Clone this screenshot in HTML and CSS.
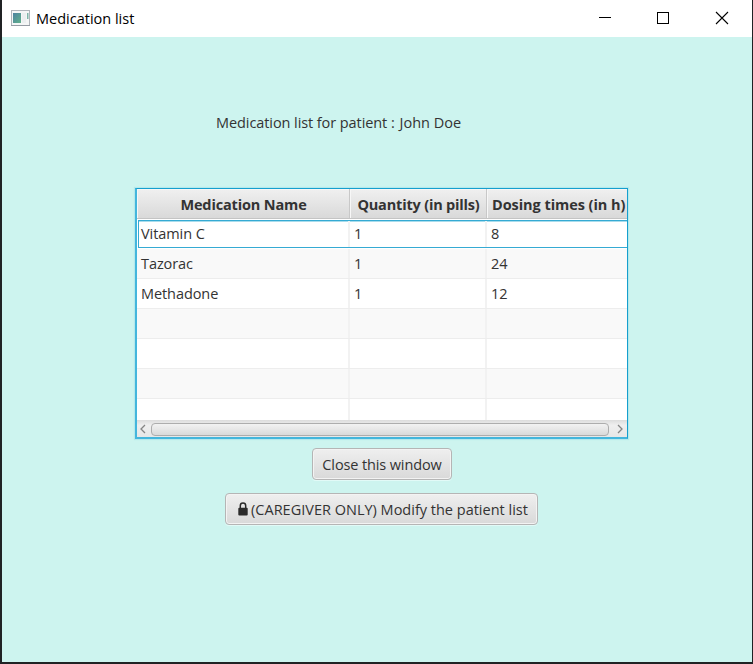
FILE: index.html
```html
<!DOCTYPE html>
<html lang="en">
<head>
<meta charset="utf-8">
<title>Medication list</title>
<link rel="stylesheet" href="styles.css">
</head>
<body>
<div class="window">
  <header class="titlebar">
    <svg class="app-icon" width="19" height="16" viewBox="0 0 19 16">
      <defs><linearGradient id="g" x1="0" y1="0" x2="1" y2="1"><stop offset="0" stop-color="#4d82a0"/><stop offset="1" stop-color="#61b18b"/></linearGradient></defs>
      <rect x=".5" y=".5" width="18" height="15" fill="#f5f6f6" stroke="#b1b5bb"/>
      <path d="M0 15.5H19" stroke="#969ca4"/>
      <rect x="2" y="3" width="8" height="10" fill="url(#g)"/>
      <rect x="11" y="3" width="4" height="10" fill="#eceff0"/>
      <rect x="16" y="3" width="1.5" height="6" fill="#80b6a9"/>
    </svg>
    <span class="title">Medication list</span>
    <svg class="controls" width="132" height="14" viewBox="0 0 132 14" fill="none" stroke="#000">
      <path d="M0 6.5H12"/>
      <rect x="58.5" y="1.5" width="11" height="11"/>
      <path d="M117 1L129 13M129 1L117 13" stroke-width="1.1"/>
    </svg>
  </header>
  <main class="content">
    <p class="caption"><span class="label">Medication list for patient :</span><span class="patient">John Doe</span></p>
    <div class="table">
      <div class="row head"><div><span class="h1">Medication Name</span></div><div><span class="h2">Quantity (in pills)</span></div><div><span class="h3">Dosing times (in h)</span></div></div>
      <div class="rows">
        <div class="row focused"><div>Vitamin C</div><div>1</div><div>8</div></div>
        <div class="row odd"><div>Tazorac</div><div>1</div><div>24</div></div>
        <div class="row"><div>Methadone</div><div>1</div><div>12</div></div>
        <div class="row odd"><div></div><div></div><div></div></div>
        <div class="row"><div></div><div></div><div></div></div>
        <div class="row odd"><div></div><div></div><div></div></div>
        <div class="row"><div></div><div></div><div></div></div>
      </div>
      <div class="scrollbar">
        <svg width="14" height="16" viewBox="0 0 14 16"><path d="M8 4L4 8L8 12" fill="none" stroke="#858585" stroke-width="1.3"/></svg>
        <div class="thumb"></div>
        <svg width="18" height="16" viewBox="0 0 18 16"><path d="M9 4L13 8L9 12" fill="none" stroke="#858585" stroke-width="1.3"/></svg>
      </div>
    </div>
    <button class="btn close"><span>Close this window</span></button>
    <button class="btn modify">
      <svg width="10" height="14" viewBox="0 0 10 14"><path d="M2.3 6V3.8a2.7 2.7 0 0 1 5.4 0V6" fill="none" stroke="#2b2b2b" stroke-width="1.5"/><rect x=".3" y="5.7" width="9.4" height="7.8" rx="1" fill="#2b2b2b"/></svg>
      <span>(CAREGIVER ONLY) Modify the patient list</span>
    </button>
  </main>
</div>
</body>
</html>
```
FILE: styles.css
```css
* { box-sizing: border-box; }
body { margin: 0; font: 14.5px/20px "Open Sans", "Noto Sans", sans-serif; color: #333; }
.window { width: 753px; height: 664px; display: flex; flex-direction: column; border: solid #202224; border-width: 0 1px 2px 2px; background: #cdf4ef; overflow: hidden; }
.titlebar { height: 37px; flex: none; background: #fff; display: flex; align-items: center; padding-left: 9px; color: #000; }
.app-icon { margin-right: 6px; margin-bottom: 1px; }
.title { white-space: nowrap; }
.controls { margin-left: auto; margin-right: 21px; margin-bottom: 1px; }
.content { display: flex; flex-direction: column; align-items: flex-start; white-space: nowrap; }
.caption { margin: 76px 0 0 214px; display: flex; gap: 5px; height: 20px; }
.label { letter-spacing: -.08px; }
.table { width: 493px; height: 251px; margin: 55px 0 0 133px; border: 1px solid #159fce; border-left: 2px solid #44b6dc; border-bottom: 2px solid #44b6dc; background: #fff; box-shadow: 0 0 1px 1px #b5e9ec; overflow: hidden; }
.row { display: grid; grid-template-columns: 213px 137px 140px; height: 30px; border-bottom: 1px solid #ededed; }
.row > div { border-right: 2px solid #f2f2f2; padding: 5px 0 0 4px; overflow: hidden; letter-spacing: -.08px; }
.row > div:last-child { border-right: 0; }
.row.odd { background: #f9f9f9; }
.row.focused { background: #fff; height: 28px; margin: 0 0 1px 1px; border: solid #35aad3; border-width: 1px 0 1px 1px; box-shadow: inset 0 1px #a9dcec; grid-template-columns: 211px 137px 140px; }
.row.focused > div { padding: 3px 0 0 4px; }
.row.focused > div:first-child { padding-left: 2px; }
.row.head { height: 30px; background: linear-gradient(#f0f0f0, #d9d9d9); border-bottom: 1px solid #c4c4c4; font-weight: 700; }
.row.head > div { padding: 6px 0 0 1px; text-align: center; border-right: 1px solid #c8c8c8; box-shadow: inset 1px 1px #f7f7f7; }
.row.head > div:last-child { border-right: 0; padding-left: 5px; text-align: left; }
.row.head .h1 { letter-spacing: -.15px; }
.row.head .h2 { letter-spacing: -.18px; }
.row.head .h3 { letter-spacing: -.06px; }
.rows { height: 201px; padding-top: 1px; overflow: hidden; }
.scrollbar { height: 17px; padding-top: 1px; display: flex; align-items: center; background: linear-gradient(#dcdcdc, #efefef 30%, #e7e7e7); }
.thumb { flex: 1; height: 13px; border: 1px solid #adadad; border-radius: 4px; background: linear-gradient(#f2f2f2, #dadada); }
.btn { height: 32px; padding: 2px 0 0; border: 1px solid #b5b5b5; border-radius: 4px; background: linear-gradient(#efefef, #d9d9d9); box-shadow: inset 0 0 0 1px #f3f3f3, 0 1px #e2faf7; color: #333; font: inherit; display: flex; align-items: center; justify-content: center; }
.close { width: 140px; margin: 9px 0 0 310px; letter-spacing: -.12px; }
.modify { width: 313px; margin: 13px 0 0 223px; padding-left: 3px; gap: 3px; }
.modify svg { margin-bottom: 2px; }
```
